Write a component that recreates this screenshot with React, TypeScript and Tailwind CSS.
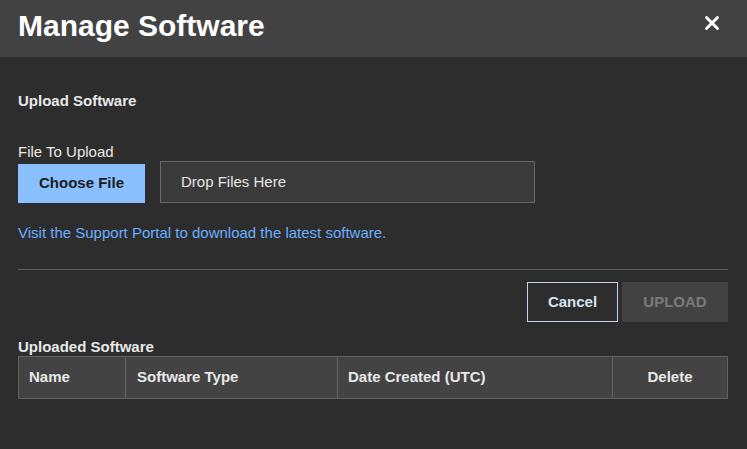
import { X } from "lucide-react";

const columns = [
  { label: "Name", className: "pl-[10px]" },
  { label: "Software Type", className: "pl-[11px]" },
  { label: "Date Created (UTC)", className: "pl-[10px]" },
  { label: "Delete", className: "justify-center" },
];

export default function App() {
  return (
    <div className="w-[747px] h-[449px] bg-[#2d2d2d] text-[#e8e8e8] font-['Liberation_Sans',Arial,sans-serif] overflow-hidden">
      {/* header */}
      <div className="h-[57px] bg-[#424242] flex items-start justify-between pl-[18px] pr-[24px] pt-[11px]">
        <h1 className="text-[30px] leading-[30px] font-bold text-white">Manage Software</h1>
        <button className="mt-[1px] text-white" aria-label="Close">
          <X className="w-[22px] h-[22px]" strokeWidth={3.2} />
        </button>
      </div>

      <div className="pl-[18px] pr-[19px] pt-[35px]">
        <h2 className="text-[15px] leading-[17px] font-bold">Upload Software</h2>

        <p className="mt-[34px] text-[15px] leading-[17px]">File To Upload</p>
        <div className="mt-[1px] flex items-end gap-[15px]">
          <button className="w-[127px] h-[39px] bg-[#8ac0ff] text-[#1b1b1b] text-[15px] font-bold">
            Choose File
          </button>
          <div className="w-[375px] h-[42px] bg-[#3a3a3a] border border-[#676767] flex items-center pl-[20px] text-[15px] text-[#e6e6e6]">
            Drop Files Here
          </div>
        </div>

        <a href="#" className="block mt-[21px] text-[15px] leading-[17px] text-[#6aafff]">
          Visit the Support Portal to download the latest software.
        </a>

        <div className="mt-[28px] h-px bg-[#5c5c5c]" />

        <div className="mt-[12px] flex justify-end gap-[4px]">
          <button className="w-[91px] h-[40px] border border-[#c4d4e6] text-[#d6e3f2] text-[15px] font-bold">
            Cancel
          </button>
          <button disabled className="w-[106px] h-[40px] bg-[#424242] text-[#7a7a7a] text-[15px] font-bold">
            UPLOAD
          </button>
        </div>

        <h2 className="mt-[16px] text-[15px] leading-[17px] font-bold">Uploaded Software</h2>
        <div className="mt-[1px] grid grid-cols-[107px_212px_275px_1fr] h-[43px] bg-[#434343] border border-[#626262]">
          {columns.map((c, i) => (
            <div
              key={c.label}
              className={`flex items-center text-[15px] font-bold ${c.className} ${i < columns.length - 1 ? "border-r border-[#626262]" : ""}`}
            >
              {c.label}
            </div>
          ))}
        </div>
      </div>
    </div>
  );
}
